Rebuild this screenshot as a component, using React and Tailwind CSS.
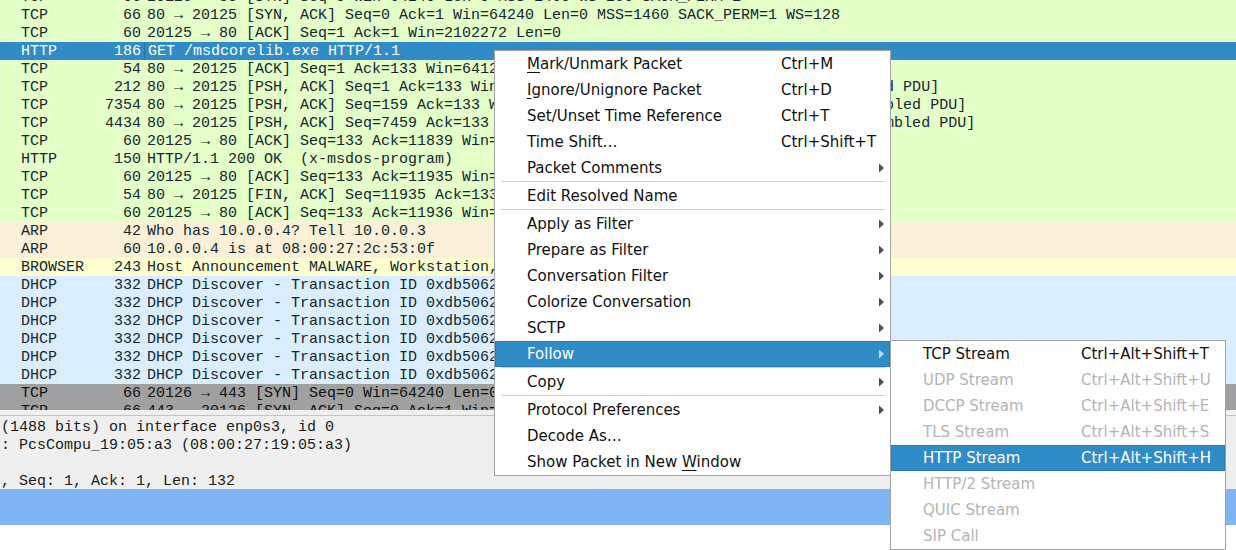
import React from "react";

const rows = [
  ["TCP", "66", "20125 → 80 [SYN] Seq=0 Win=64240 Len=0 MSS=1460 WS=256 SACK_PERM=1", "g"],
  ["TCP", "66", "80 → 20125 [SYN, ACK] Seq=0 Ack=1 Win=64240 Len=0 MSS=1460 SACK_PERM=1 WS=128", "g"],
  ["TCP", "60", "20125 → 80 [ACK] Seq=1 Ack=1 Win=2102272 Len=0", "g"],
  ["HTTP", "186", "GET /msdcorelib.exe HTTP/1.1", "sel"],
  ["TCP", "54", "80 → 20125 [ACK] Seq=1 Ack=133 Win=64128 Len=0", "g"],
  ["TCP", "212", "80 → 20125 [PSH, ACK] Seq=1 Ack=133 Win=64128 Len=158 [TCP segment of a reassembled PDU]", "g"],
  ["TCP", "7354", "80 → 20125 [PSH, ACK] Seq=159 Ack=133 Win=64128 Len=7300 [TCP segment of a reassembled PDU]", "g"],
  ["TCP", "4434", "80 → 20125 [PSH, ACK] Seq=7459 Ack=133 Win=64128 Len=4380 [TCP segment of a reassembled PDU]", "g"],
  ["TCP", "60", "20125 → 80 [ACK] Seq=133 Ack=11839 Win=2102272 Len=0", "g"],
  ["HTTP", "150", "HTTP/1.1 200 OK  (x-msdos-program)", "g"],
  ["TCP", "60", "20125 → 80 [ACK] Seq=133 Ack=11935 Win=2102272 Len=0", "g"],
  ["TCP", "54", "80 → 20125 [FIN, ACK] Seq=11935 Ack=133 Win=64128 Len=0", "g"],
  ["TCP", "60", "20125 → 80 [ACK] Seq=133 Ack=11936 Win=2102272 Len=0", "g"],
  ["ARP", "42", "Who has 10.0.0.4? Tell 10.0.0.3", "a"],
  ["ARP", "60", "10.0.0.4 is at 08:00:27:2c:53:0f", "a"],
  ["BROWSER", "243", "Host Announcement MALWARE, Workstation, Server, NT Workstation", "y"],
  ["DHCP", "332", "DHCP Discover - Transaction ID 0xdb50621e", "b"],
  ["DHCP", "332", "DHCP Discover - Transaction ID 0xdb50621e", "b"],
  ["DHCP", "332", "DHCP Discover - Transaction ID 0xdb50621e", "b"],
  ["DHCP", "332", "DHCP Discover - Transaction ID 0xdb50621e", "b"],
  ["DHCP", "332", "DHCP Discover - Transaction ID 0xdb50621e", "b"],
  ["DHCP", "332", "DHCP Discover - Transaction ID 0xdb50621e", "b"],
  ["TCP", "66", "20126 → 443 [SYN] Seq=0 Win=64240 Len=0 MSS=1460 WS=256 SACK_PERM=1", "k"],
  ["TCP", "66", "443 → 20126 [SYN, ACK] Seq=0 Ack=1 Win=64240 Len=0 MSS=1460 SACK_PERM=1 WS=128", "k"],
];

const rowCls = {
  g: "bg-[#e4ffc7] text-[#12272e]",
  a: "bg-[#faf0d7] text-[#12272e]",
  y: "bg-[#feffd0] text-[#12272e]",
  b: "bg-[#daeeff] text-[#12272e]",
  k: "bg-[#a0a0a0] text-[#101010]",
  sel: "bg-[#308cc6] text-white",
};

function Arrow({ light }) {
  return (
    <svg width="5" height="9" viewBox="0 0 5 9" className="absolute right-[6px] top-1/2 -translate-y-1/2">
      <path d="M0 0 L5 4.5 L0 9 Z" fill={light ? "#b9d9ef" : "#505050"} />
    </svg>
  );
}

function Item({ label, shortcut, sub, hi, disabled, shortcutLeft = 286, textLeft = 32 }) {
  return (
    <div
      className={
        "relative h-[26px] flex items-center whitespace-nowrap " +
        (hi ? "bg-[#308cc6] text-white outline outline-1 outline-[#2a7db4] -outline-offset-1 " : "") +
        (disabled ? "text-[#b4b4b4] " : hi ? "" : "text-[#111] ")
      }
    >
      <span className="absolute" style={{ left: textLeft }}>{label}</span>
      {shortcut && (
        <span className="absolute" style={{ left: shortcutLeft }}>{shortcut}</span>
      )}
      {sub && <Arrow light={hi} />}
    </div>
  );
}

function Sep() {
  return <div className="h-[2px] ml-[6px] mr-[5px] border-t border-[#cfcfcf]" />;
}

export default function App() {
  return (
    <div className="relative w-[1236px] h-[550px] overflow-hidden bg-white flex flex-col">
      {/* Packet list */}
      <div className="h-[410px] overflow-hidden shrink-0 font-['Liberation_Mono',monospace] text-[15px]">
        <div className="mt-[-12px]">
          {rows.map(([proto, len, info, c], i) => (
            <div key={i} className={"flex h-[18px] items-center pt-[2px] whitespace-pre " + rowCls[c]}>
              <div className="w-[105px] pl-[21px] shrink-0">{proto}</div>
              <div className="w-[39px] pr-[3px] text-right shrink-0">{len}</div>
              <div
                className={
                  "flex-1 pl-[3px] " +
                  (c === "sel" ? "border-l border-[#2574a8] -mt-[2px] pt-[2px] h-[18px] flex items-center" : "")
                }
              >
                {info}
              </div>
            </div>
          ))}
        </div>
      </div>
      {/* splitter */}
      <div className="h-[6px] shrink-0 bg-[#efefef] border-b border-[#c4c4c4]" />
      {/* detail pane */}
      <div className="h-[73px] shrink-0 bg-[#efefef] pt-[3px] font-['Liberation_Mono',monospace] text-[15px] text-[#1a1a1a] whitespace-pre">
        <div className="h-[18px] flex items-center pl-[1px]">(1488 bits) on interface enp0s3, id 0</div>
        <div className="h-[18px] flex items-center pl-[1px]">: PcsCompu_19:05:a3 (08:00:27:19:05:a3)</div>
        <div className="h-[18px]" />
        <div className="h-[18px] flex items-center pl-[1px]">, Seq: 1, Ack: 1, Len: 132</div>
      </div>
      {/* bytes pane */}
      <div className="h-[36px] shrink-0 bg-[#7fb4f5]" />
      <div className="flex-1 bg-white" />

      {/* Context menu */}
      <div className="absolute left-[494px] top-[50px] w-[397px] bg-white border border-[#a3a3a3] font-['DejaVu_Sans',sans-serif] text-[15px]">
        <Item label={<><span className="underline underline-offset-[3px]">M</span>ark/Unmark Packet</>} shortcut="Ctrl+M" />
        <Item label={<><span className="underline underline-offset-[3px]">I</span>gnore/Unignore Packet</>} shortcut="Ctrl+D" />
        <Item label="Set/Unset Time Reference" shortcut="Ctrl+T" />
        <Item label="Time Shift…" shortcut="Ctrl+Shift+T" />
        <Item label="Packet Comments" sub />
        <Sep />
        <Item label="Edit Resolved Name" />
        <Sep />
        <Item label="Apply as Filter" sub />
        <Item label="Prepare as Filter" sub />
        <Item label="Conversation Filter" sub />
        <Item label="Colorize Conversation" sub />
        <Item label="SCTP" sub />
        <Item label="Follow" sub hi />
        <Sep />
        <Item label="Copy" sub />
        <Sep />
        <Item label="Protocol Preferences" sub />
        <Item label="Decode As…" />
        <Item label={<>Show Packet in New <span className="underline underline-offset-[3px]">W</span>indow</>} />
      </div>

      {/* Submenu */}
      <div className="absolute left-[890px] top-[340px] w-[336px] bg-white border border-[#a3a3a3] font-['DejaVu_Sans',sans-serif] text-[15px]">
        <Item label="TCP Stream" shortcut="Ctrl+Alt+Shift+T" shortcutLeft={190} textLeft={32} />
        <Item label="UDP Stream" shortcut="Ctrl+Alt+Shift+U" shortcutLeft={190} textLeft={32} disabled />
        <Item label="DCCP Stream" shortcut="Ctrl+Alt+Shift+E" shortcutLeft={190} textLeft={32} disabled />
        <Item label="TLS Stream" shortcut="Ctrl+Alt+Shift+S" shortcutLeft={190} textLeft={32} disabled />
        <Item label="HTTP Stream" shortcut="Ctrl+Alt+Shift+H" shortcutLeft={190} textLeft={32} hi />
        <Item label="HTTP/2 Stream" shortcutLeft={190} textLeft={32} disabled />
        <Item label="QUIC Stream" shortcutLeft={190} textLeft={32} disabled />
        <Item label="SIP Call" shortcutLeft={190} textLeft={32} disabled />
      </div>
    </div>
  );
}
